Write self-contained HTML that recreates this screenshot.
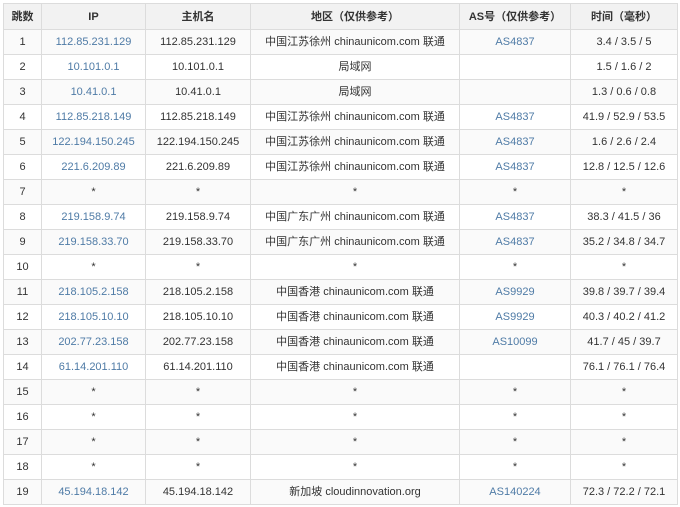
<!DOCTYPE html>
<html><head><meta charset="utf-8"><style>
html,body{margin:0;padding:0;background:#fff;width:680px;height:507px;overflow:hidden}
table{position:absolute;left:3px;top:3px;border-collapse:collapse;font-family:"Liberation Sans","Noto Sans CJK SC",sans-serif;font-size:11px;line-height:14px;color:#333;table-layout:fixed}
td,th{border:1px solid #dcdcdc;text-align:center;vertical-align:middle;height:24px;padding:0;white-space:nowrap;overflow:hidden}
th{background:#f2f2f2;font-weight:bold;height:25px;color:#333}
tr:nth-child(odd) td{background:#fafafa}
a{color:#4f7ba6;text-decoration:none}
</style></head><body>
<table>
<colgroup><col style="width:38px"><col style="width:104px"><col style="width:105px"><col style="width:209px"><col style="width:111px"><col style="width:107px"></colgroup>
<thead><tr><th>跳数</th><th>IP</th><th>主机名</th><th>地区（仅供参考）</th><th>AS号（仅供参考）</th><th>时间（毫秒）</th></tr></thead>
<tbody>
<tr><td>1</td><td><a>112.85.231.129</a></td><td>112.85.231.129</td><td>中国江苏徐州 chinaunicom.com 联通</td><td><a>AS4837</a></td><td>3.4 / 3.5 / 5</td></tr>
<tr><td>2</td><td><a>10.101.0.1</a></td><td>10.101.0.1</td><td>局域网</td><td></td><td>1.5 / 1.6 / 2</td></tr>
<tr><td>3</td><td><a>10.41.0.1</a></td><td>10.41.0.1</td><td>局域网</td><td></td><td>1.3 / 0.6 / 0.8</td></tr>
<tr><td>4</td><td><a>112.85.218.149</a></td><td>112.85.218.149</td><td>中国江苏徐州 chinaunicom.com 联通</td><td><a>AS4837</a></td><td>41.9 / 52.9 / 53.5</td></tr>
<tr><td>5</td><td><a>122.194.150.245</a></td><td>122.194.150.245</td><td>中国江苏徐州 chinaunicom.com 联通</td><td><a>AS4837</a></td><td>1.6 / 2.6 / 2.4</td></tr>
<tr><td>6</td><td><a>221.6.209.89</a></td><td>221.6.209.89</td><td>中国江苏徐州 chinaunicom.com 联通</td><td><a>AS4837</a></td><td>12.8 / 12.5 / 12.6</td></tr>
<tr><td>7</td><td>*</td><td>*</td><td>*</td><td>*</td><td>*</td></tr>
<tr><td>8</td><td><a>219.158.9.74</a></td><td>219.158.9.74</td><td>中国广东广州 chinaunicom.com 联通</td><td><a>AS4837</a></td><td>38.3 / 41.5 / 36</td></tr>
<tr><td>9</td><td><a>219.158.33.70</a></td><td>219.158.33.70</td><td>中国广东广州 chinaunicom.com 联通</td><td><a>AS4837</a></td><td>35.2 / 34.8 / 34.7</td></tr>
<tr><td>10</td><td>*</td><td>*</td><td>*</td><td>*</td><td>*</td></tr>
<tr><td>11</td><td><a>218.105.2.158</a></td><td>218.105.2.158</td><td>中国香港 chinaunicom.com 联通</td><td><a>AS9929</a></td><td>39.8 / 39.7 / 39.4</td></tr>
<tr><td>12</td><td><a>218.105.10.10</a></td><td>218.105.10.10</td><td>中国香港 chinaunicom.com 联通</td><td><a>AS9929</a></td><td>40.3 / 40.2 / 41.2</td></tr>
<tr><td>13</td><td><a>202.77.23.158</a></td><td>202.77.23.158</td><td>中国香港 chinaunicom.com 联通</td><td><a>AS10099</a></td><td>41.7 / 45 / 39.7</td></tr>
<tr><td>14</td><td><a>61.14.201.110</a></td><td>61.14.201.110</td><td>中国香港 chinaunicom.com 联通</td><td></td><td>76.1 / 76.1 / 76.4</td></tr>
<tr><td>15</td><td>*</td><td>*</td><td>*</td><td>*</td><td>*</td></tr>
<tr><td>16</td><td>*</td><td>*</td><td>*</td><td>*</td><td>*</td></tr>
<tr><td>17</td><td>*</td><td>*</td><td>*</td><td>*</td><td>*</td></tr>
<tr><td>18</td><td>*</td><td>*</td><td>*</td><td>*</td><td>*</td></tr>
<tr><td>19</td><td><a>45.194.18.142</a></td><td>45.194.18.142</td><td>新加坡 cloudinnovation.org</td><td><a>AS140224</a></td><td>72.3 / 72.2 / 72.1</td></tr>
</tbody></table>
</body></html>
